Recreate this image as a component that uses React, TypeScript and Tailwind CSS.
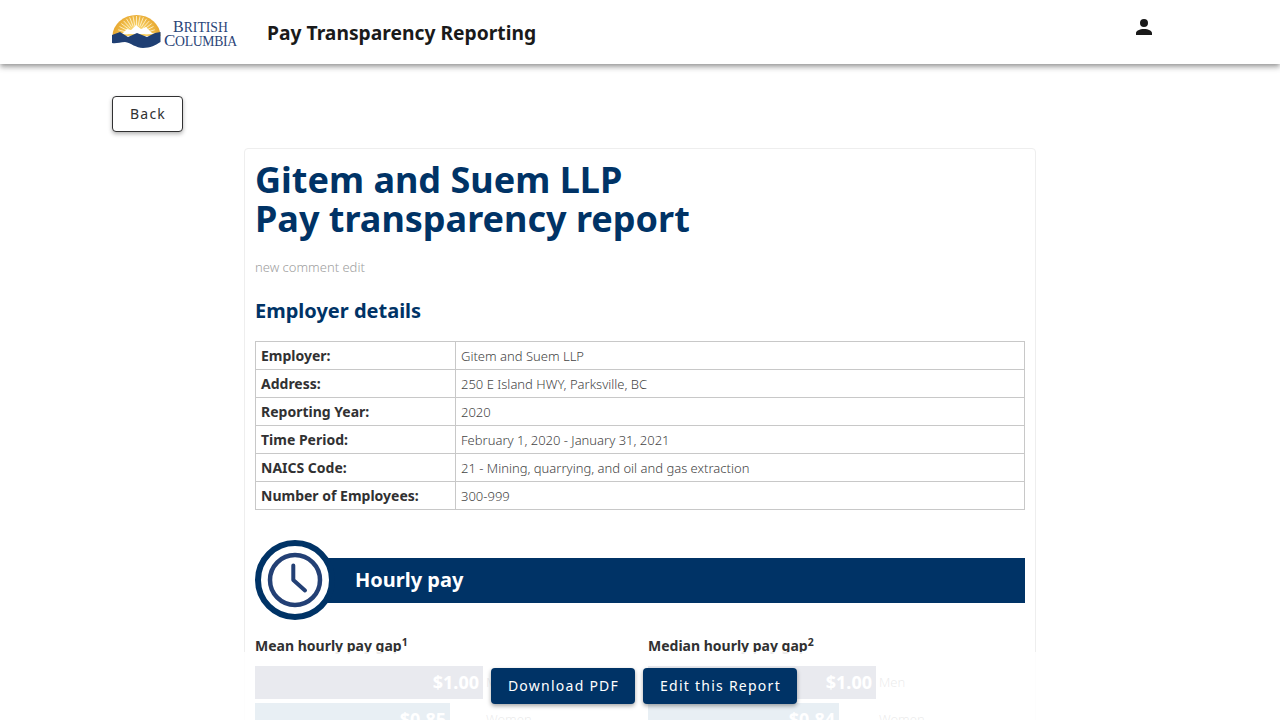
const rows = [
  ["Employer:", "Gitem and Suem LLP"],
  ["Address:", "250 E Island HWY, Parksville, BC"],
  ["Reporting Year:", "2020"],
  ["Time Period:", "February 1, 2020 - January 31, 2021"],
  ["NAICS Code:", "21 - Mining, quarrying, and oil and gas extraction"],
  ["Number of Employees:", "300-999"],
];

function Logo() {
  const rays = [];
  for (let i = 0; i < 17; i++) {
    const a = (Math.PI * (i + 0.5)) / 17;
    const x1 = 24.5 + 9 * Math.cos(a), y1 = 21 - 9 * Math.sin(a);
    const x2 = 24.5 + 19 * Math.cos(a), y2 = 21 - 19 * Math.sin(a);
    rays.push(<line key={i} x1={x1} y1={y1} x2={x2} y2={y2} stroke="#fff6d8" strokeWidth="0.8" />);
  }
  return (
    <div className="flex w-[126px] h-[36px] shrink-0">
      <svg width="50" height="36" viewBox="0 0 50 36" className="shrink-0">
        <defs>
          <radialGradient id="sun" cx="24.5" cy="21" r="24" gradientUnits="userSpaceOnUse">
            <stop offset="0.35" stopColor="#f8d064" />
            <stop offset="1" stopColor="#e6a52c" />
          </radialGradient>
        </defs>
        <path d="M0.5 22 A24 21 0 0 1 48.5 22 Z" fill="url(#sun)" />
        {rays}
        <path d="M10 20 L15 15 L19 16 L24 11 L29 15 L34 13 L41 20 Z" fill="#ffffff" />
        <path d="M0 21 L8 18 L16 23 L25 19 L35 23 L43 19 L48.5 18 V28 C44 31 38 34 31 34 C24 34 19 29 13 28 C8 28 4 30 0 29 Z" fill="#1f3f73" />
      </svg>
      <div className="ml-[2px] pt-[6px] flex flex-col items-center font-['Liberation_Serif',serif] text-[#2a4478]">
        <span className="text-[16px] leading-[13px]">B<span className="text-[13.7px]">RITISH</span></span>
        <span className="text-[17px] leading-[13px] tracking-[-0.3px] whitespace-nowrap">C<span className="text-[13.7px]">OLUMBIA</span></span>
        <span className="block w-[55px] h-[1px] bg-[#f0c65e] mt-[2px]" />
      </div>
    </div>
  );
}

function Bars({ title, sup, women, womenW }: { title: string; sup: string; women: string; womenW: string }) {
  return (
    <div className="w-[393px] shrink-0">
      <div className="text-[14px] font-bold leading-[20px] text-[#313132]">
        {title}<sup className="text-[10.5px]">{sup}</sup>
      </div>
      <div className="mt-[10px] flex flex-col gap-[4px]">
        <div className="flex items-center h-[33px]">
          <div className="w-[228px] h-full bg-[#232d5f] text-white text-[18px] font-bold flex items-center justify-end pr-[4px]">$1.00</div>
          <span className="ml-[3px] text-[13px] font-light text-[#313132]">Men</span>
        </div>
        <div className="flex items-center h-[33px]">
          <div className="w-[228px] h-full flex">
            <div className={`${womenW} h-full bg-[#1a5a96] text-white text-[18px] font-bold flex items-center justify-end pr-[4px]`}>{women}</div>
          </div>
          <span className="ml-[3px] text-[13px] font-light text-[#313132]">Women</span>
        </div>
      </div>
    </div>
  );
}

export default function App() {
  return (
    <div className="relative h-screen overflow-hidden bg-white font-['Noto_Sans',sans-serif] text-[#313132]">
      <header className="relative z-10 h-[64px] bg-white shadow-[0_2px_4px_-1px_rgba(0,0,0,0.25),0_4px_5px_0_rgba(0,0,0,0.18),0_1px_10px_0_rgba(0,0,0,0.1)] px-[112px] flex items-center">
        <Logo />
        <h1 className="ml-[29px] mt-[2px] text-[19.25px] font-bold text-[#1a1a1a]">Pay Transparency Reporting</h1>
        <div className="ml-auto w-[48px] h-[48px] flex items-center justify-center -mt-[10px]">
          <svg width="24" height="24" viewBox="0 0 24 24" fill="#1a1a1a"><path d="M12 4a4 4 0 0 1 4 4 4 4 0 0 1-4 4 4 4 0 0 1-4-4 4 4 0 0 1 4-4m0 10c4.42 0 8 1.79 8 4v2H4v-2c0-2.21 3.58-4 8-4Z" /></svg>
        </div>
      </header>

      <main className="px-[112px] pt-[32px]">
        <button className="w-[71px] h-[36px] bg-white border border-[#313132] rounded-[4px] pl-[1px] pb-[2px] text-[14px] tracking-[1.25px] text-[#313132] shadow-[0_2px_4px_rgba(0,0,0,0.3)]">Back</button>

        <section className="mt-[16px] mx-auto w-[792px] border border-[#eeeeee] rounded-[4px] pt-[11px] px-[10px] pb-[10px]">
          <h2 className="text-[36px] font-bold leading-[39px] text-[#003366]">Gitem and Suem LLP<br />Pay transparency report</h2>
          <p className="mt-[20px] text-[13px] font-light leading-[18px] text-[#a0a0a0]">new comment edit</p>
          <h3 className="mt-[21px] text-[20px] font-bold leading-[28px] text-[#003366]">Employer details</h3>
          <table className="mt-[16px] w-full border-collapse table-fixed">
            <tbody>
              {rows.map(([k, v]) => (
                <tr key={k} className="h-[28px]">
                  <td className="w-[200px] border border-[#c8c8c8] px-[5px] py-0 text-[14px] font-bold leading-[20px] text-[#313132]">{k}</td>
                  <td className="border border-[#c8c8c8] px-[5px] py-0 text-[13px] font-light leading-[20px] text-[#444444] pt-[1px]">{v}</td>
                </tr>
              ))}
            </tbody>
          </table>

          <div className="mt-[30px] flex items-center h-[80px]">
            <div className="relative z-[1] w-[80px] h-[80px] shrink-0 rounded-full bg-white border-[6px] border-[#003366] flex items-center justify-center">
              <svg width="68" height="68" viewBox="0 0 68 68" fill="none" stroke="#234075" strokeLinecap="round">
                <circle cx="34" cy="34" r="25" strokeWidth="4.5" />
                <path d="M32.3 19.5 V34 L44 44.5" strokeWidth="4" strokeLinejoin="round" />
              </svg>
            </div>
            <div className="flex-1 -ml-[10px] h-[45px] bg-[#003366] pl-[30px] pb-[-1px] flex items-center text-[20px] font-bold text-white">Hourly pay</div>
          </div>

          <div className="mt-[16px] flex">
            <Bars title="Mean hourly pay gap" sup="1" women="$0.85" womenW="w-[195px]" />
            <Bars title="Median hourly pay gap" sup="2" women="$0.84" womenW="w-[191px]" />
          </div>
        </section>
      </main>

      <div className="absolute left-0 right-0 bottom-0 z-20 h-[68px] bg-white/90 flex items-start justify-center gap-[8px] pt-[16px] pl-[8px]">
        <button className="h-[36px] w-[144px] rounded-[4px] bg-[#003366] pb-[2px] pl-[1px] text-white text-[14px] tracking-[1.25px] shadow-[0_2px_4px_rgba(0,0,0,0.35)]">Download PDF</button>
        <button className="h-[36px] w-[154px] rounded-[4px] bg-[#003366] pb-[2px] pl-[1px] text-white text-[14px] tracking-[1.25px] shadow-[0_2px_4px_rgba(0,0,0,0.35)]">Edit this Report</button>
      </div>
    </div>
  );
}
